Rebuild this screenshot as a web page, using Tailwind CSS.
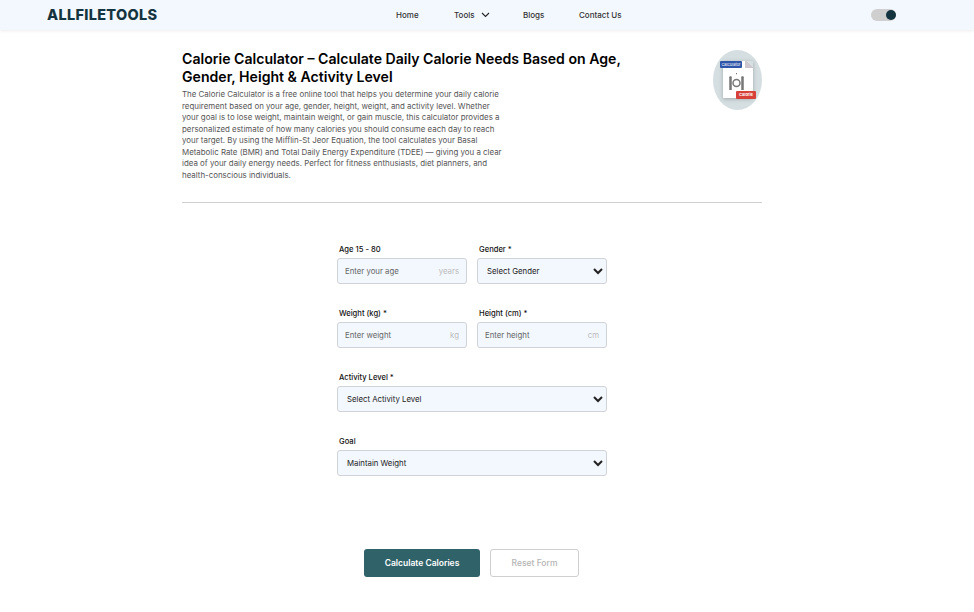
<!DOCTYPE html>
<html lang="en">
<head>
    <meta charset="UTF-8">
    <meta name="viewport" content="width=device-width, initial-scale=1.0">
    <title>Calorie Calculator</title>
    <script src="https://cdn.jsdelivr.net/npm/@tailwindcss/browser@4"></script>
</head>
<body class="bg-white font-['Inter',sans-serif] h-[612px] overflow-hidden">

    <!-- header -->
    <header class="h-[30px] bg-[#f3f8fe] shadow-[0_1px_3px_rgba(0,0,0,0.08)] flex items-center pl-[47px] pr-[78px] relative">
        <div class="w-[330px] text-[#14343f] font-extrabold text-[14.5px] tracking-[0.3px]">ALLFILETOOLS</div>
        <nav class="flex items-center text-[8px] font-medium text-[#333] ml-[19px]">
            <a class="w-[58px]">Home</a>
            <a class="w-[69px] flex items-center">Tools
                <svg class="ml-[6px] w-[9px] h-[6px]" viewBox="0 0 9 6" fill="none" stroke="#222" stroke-width="1.1"><path d="M1 1l3.5 3.5L8 1"/></svg>
            </a>
            <a class="w-[56px]">Blogs</a>
            <a>Contact Us</a>
        </nav>
        <div class="ml-auto w-[25px] h-[12px] rounded-full bg-[#cfcfcf] relative">
            <span class="absolute right-0 top-[1px] w-[10px] h-[10px] rounded-full bg-[#14343f]"></span>
        </div>
    </header>

    <main class="w-[580px] ml-[182px]">
        <!-- intro -->
        <section class="flex justify-between h-[173px] pt-[20px] border-b border-[#cfcfcf]">
            <div>
                <h1 class="w-[460px] text-[14.1px] leading-[18px] font-semibold text-black">Calorie Calculator – Calculate Daily Calorie Needs Based on Age, Gender, Height &amp; Activity Level</h1>
                <p class="w-[340px] mt-[3px] text-[7.9px] leading-[11.5px] text-[#555]">The Calorie Calculator is a free online tool that helps you determine your daily calorie<br>requirement based on your age, gender, height, weight, and activity level. Whether<br>your goal is to lose weight, maintain weight, or gain muscle, this calculator provides a<br>personalized estimate of how many calories you should consume each day to reach<br>your target. By using the Mifflin-St Jeor Equation, the tool calculates your Basal<br>Metabolic Rate (BMR) and Total Daily Energy Expenditure (TDEE) — giving you a clear<br>idea of your daily energy needs. Perfect for fitness enthusiasts, diet planners, and<br>health-conscious individuals.</p>
            </div>
            <!-- tool icon -->
            <div class="w-[49px] h-[60px] rounded-[50%] bg-[#d5dfe1] relative shrink-0">
                <div class="absolute left-[10px] top-[11px] w-[30px] h-[37px] bg-white shadow-[0_1px_4px_rgba(0,0,0,0.25)] flex items-center justify-center">
                    <svg class="w-[15px] h-[18px] mt-[4px] ml-[-3px]" viewBox="0 0 15 18" fill="none" stroke="#777" stroke-width="1.5">
                        <circle cx="7.5" cy="10" r="3.5"/>
                        <path d="M1.5 4v13M13.5 4v13" stroke-width="2.5"/>
                        <path d="M0.5 4h2M12.5 4h2M7 0.5h1"/>
                    </svg>
                </div>
                <svg class="absolute left-[32px] top-[11px] w-[8px] h-[7px]" viewBox="0 0 8 7"><path d="M0 0h2l6 6v1H0z" fill="#cdc8d0"/><path d="M2 0h6v6z" fill="#d5dfe1"/></svg>
                <span class="absolute left-[7px] top-[11px] w-[22px] h-[7px] rounded-[1px] bg-[#2f55a8] text-white text-[4px] leading-[7px] text-center">Calculator</span>
                <span class="absolute left-[23px] top-[41px] w-[20px] h-[8px] rounded-[1px] bg-[#d8403a] text-white text-[4px] font-bold leading-[8px] text-center">Calorie</span>
            </div>
        </section>

        <!-- form -->
        <form class="w-[270px] ml-[155px] mt-[41px]">
            <div class="grid grid-cols-2 gap-x-[10px]">
                <div>
                    <label class="block pl-[2px] h-[14px] text-[7.6px] leading-[12px] font-medium text-[#111]">Age 15 - 80</label>
                    <div class="h-[26px] px-[7px] pt-[1px] flex items-center justify-between bg-[#f3f8fe] border border-[#cfd3d8] rounded-[3px] text-[7.8px]">
                        <span class="text-[#666]">Enter your age</span><span class="text-[#bbb]">years</span>
                    </div>
                </div>
                <div>
                    <label class="block pl-[2px] h-[14px] text-[7.6px] leading-[12px] font-medium text-[#111]">Gender *</label>
                    <select class="block w-full h-[26px] pl-[5px] bg-[#f3f8fe] border border-[#cfd3d8] rounded-[3px] text-[7.8px] text-[#222]"><option>Select Gender</option></select>
                </div>
            </div>
            <div class="grid grid-cols-2 gap-x-[10px] mt-[24px]">
                <div>
                    <label class="block pl-[2px] h-[14px] text-[7.6px] leading-[12px] font-medium text-[#111]">Weight (kg) *</label>
                    <div class="h-[26px] px-[7px] pt-[1px] flex items-center justify-between bg-[#f3f8fe] border border-[#cfd3d8] rounded-[3px] text-[7.8px]">
                        <span class="text-[#666]">Enter weight</span><span class="text-[#bbb]">kg</span>
                    </div>
                </div>
                <div>
                    <label class="block pl-[2px] h-[14px] text-[7.6px] leading-[12px] font-medium text-[#111]">Height (cm) *</label>
                    <div class="h-[26px] px-[7px] pt-[1px] flex items-center justify-between bg-[#f3f8fe] border border-[#cfd3d8] rounded-[3px] text-[7.8px]">
                        <span class="text-[#666]">Enter height</span><span class="text-[#bbb]">cm</span>
                    </div>
                </div>
            </div>
            <div class="mt-[24px]">
                <label class="block pl-[2px] h-[14px] text-[7.6px] leading-[12px] font-medium text-[#111]">Activity Level *</label>
                <select class="block w-full h-[26px] pl-[5px] bg-[#f3f8fe] border border-[#cfd3d8] rounded-[3px] text-[7.8px] text-[#222]"><option>Select Activity Level</option></select>
            </div>
            <div class="mt-[24px]">
                <label class="block pl-[2px] h-[14px] text-[7.6px] leading-[12px] font-medium text-[#111]">Goal</label>
                <select class="block w-full h-[26px] pl-[5px] bg-[#f3f8fe] border border-[#cfd3d8] rounded-[3px] text-[7.8px] text-[#222]"><option>Maintain Weight</option></select>
            </div>
            <div class="flex justify-center gap-[10px] mt-[73px] ml-[-1px]">
                <button type="button" class="w-[116px] h-[28px] rounded-[3px] bg-[#2f6369] text-white text-[8.5px] font-semibold">Calculate Calories</button>
                <button type="button" class="w-[89px] h-[28px] rounded-[3px] bg-white border border-[#cfcfcf] text-[#b5b5b5] text-[8.5px] font-medium">Reset Form</button>
            </div>
        </form>
    </main>

</body>
</html>
